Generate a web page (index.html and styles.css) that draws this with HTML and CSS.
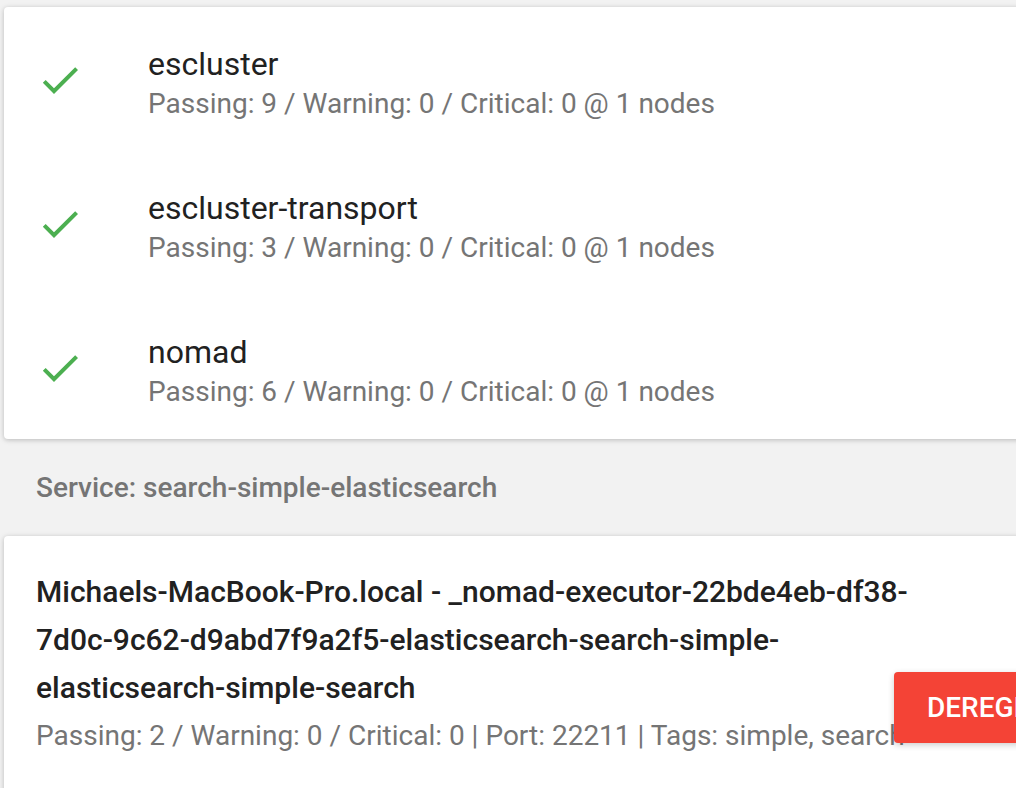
FILE: index.html
```html
<!DOCTYPE html>
<html>
<head>
<meta charset="utf-8">
<link rel="stylesheet" href="styles.css">
</head>
<body>
<div class="page">
  <div class="card list">
    <div class="row">
      <div class="icon"><svg viewBox="0 0 24 24" width="48" height="48"><path d="M9 16.17L4.83 12l-1.42 1.41L9 19 21 7l-1.41-1.41z" fill="#4caf50"/></svg></div>
      <div class="texts">
        <div class="primary">escluster</div>
        <div class="secondary">Passing: 9 / Warning: 0 / Critical: 0 @ 1 nodes</div>
      </div>
    </div>
    <div class="row">
      <div class="icon"><svg viewBox="0 0 24 24" width="48" height="48"><path d="M9 16.17L4.83 12l-1.42 1.41L9 19 21 7l-1.41-1.41z" fill="#4caf50"/></svg></div>
      <div class="texts">
        <div class="primary">escluster-transport</div>
        <div class="secondary">Passing: 3 / Warning: 0 / Critical: 0 @ 1 nodes</div>
      </div>
    </div>
    <div class="row">
      <div class="icon"><svg viewBox="0 0 24 24" width="48" height="48"><path d="M9 16.17L4.83 12l-1.42 1.41L9 19 21 7l-1.41-1.41z" fill="#4caf50"/></svg></div>
      <div class="texts">
        <div class="primary">nomad</div>
        <div class="secondary">Passing: 6 / Warning: 0 / Critical: 0 @ 1 nodes</div>
      </div>
    </div>
  </div>
  <div class="section-label">Service: search-simple-elasticsearch</div>
  <div class="card instance">
    <div class="inst-text">
      <div class="inst-title">Michaels-MacBook-Pro.local - _nomad-executor-22bde4eb-df38-7d0c-9c62-d9abd7f9a2f5-elasticsearch-search-simple-elasticsearch-simple-search</div>
      <div class="inst-sub">Passing: 2 / Warning: 0 / Critical: 0 | Port: 22211 | Tags: simple, search</div>
    </div>
    <button class="dereg">DEREGISTER</button>
  </div>
</div>
</body>
</html>
```
FILE: styles.css
```css
html, body {
  margin: 0;
  padding: 0;
  background: #f2f2f2;
  overflow: hidden;
}
body {
  font-family: Roboto, "Liberation Sans", sans-serif;
  width: 1016px;
  height: 788px;
}
.page {
  padding: 7px 0 0 4px;
  width: 1100px;
}
.card {
  background: #fff;
  border-radius: 4px;
  box-shadow: 0 1px 6px rgba(0,0,0,0.12), 0 1px 4px rgba(0,0,0,0.12);
}
.row {
  display: flex;
  align-items: center;
  height: 144px;
  box-sizing: border-box;
  padding-left: 32px;
}
.icon {
  width: 48px;
  height: 48px;
  margin-right: 64px;
  margin-top: 2px;
}
.icon svg { display: block; }
.texts { padding-top: 10px; }
.primary {
  font-size: 32px;
  color: #212121;
  line-height: 40px;
}
.secondary {
  font-size: 28px;
  color: #757575;
  line-height: 40px;
}
.section-label {
  font-size: 28px;
  font-weight: 500;
  color: #757575;
  padding: 32px 0 32px 32px;
  line-height: 33px;
}
.instance {
  position: relative;
  padding: 32px 0 40px 32px;
}
.inst-text {
  width: 900px;
}
.inst-title {
  font-size: 30px;
  font-weight: 500;
  color: #212121;
  line-height: 48px;
}
.inst-sub {
  font-size: 28px;
  color: #757575;
  line-height: 48px;
}
.dereg {
  position: absolute;
  left: 890px;
  top: 136px;
  background: #f44336;
  color: #fff;
  border: none;
  border-radius: 4px;
  font-family: Roboto, sans-serif;
  font-size: 28px;
  font-weight: 500;
  height: 71px;
  padding: 0 33px;
  box-shadow: 0 2px 6px rgba(0,0,0,0.2);
}
```
